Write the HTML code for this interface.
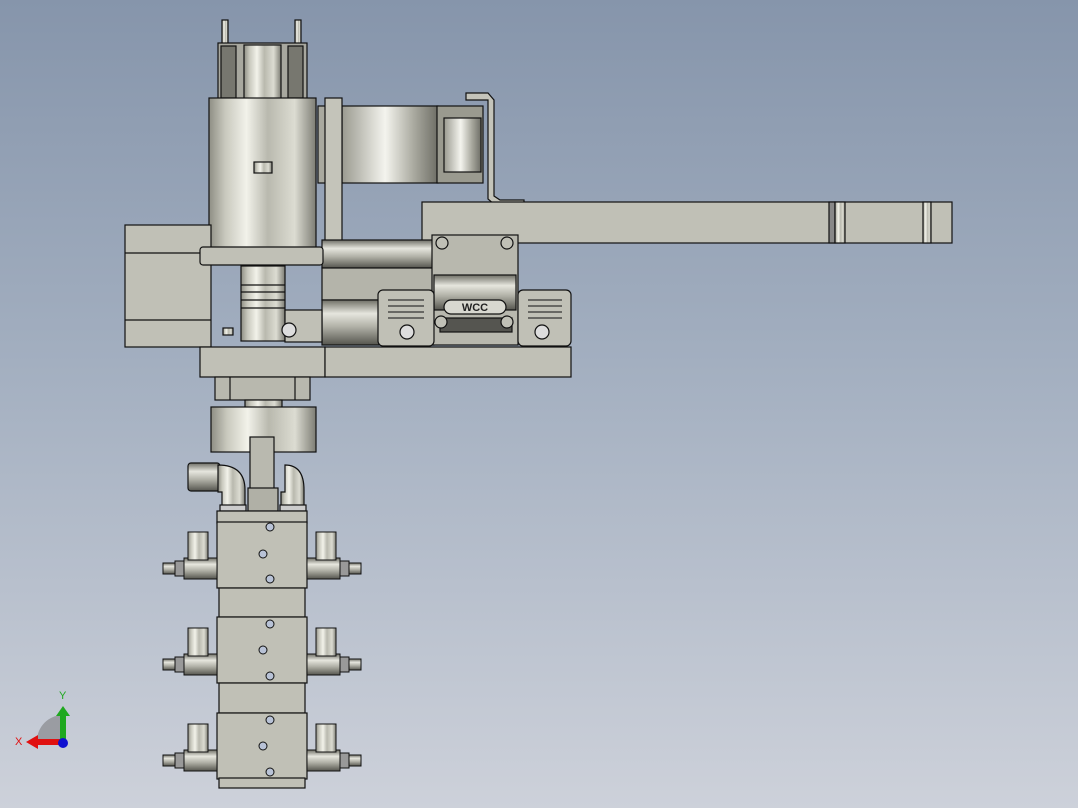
<!DOCTYPE html>
<html><head><style>html,body{margin:0;padding:0;width:1078px;height:808px;overflow:hidden}
body{background:linear-gradient(180deg,#8695ab 0%,#a3afc0 45%,#cdd1da 100%)}
svg{position:absolute;left:0;top:0}</style></head><body>
<svg width="1078" height="808" viewBox="0 0 1078 808" xmlns="http://www.w3.org/2000/svg">
<defs>
<linearGradient id="cyl" x1="0" x2="1" y1="0" y2="0">
<stop offset="0" stop-color="#8e8e84"/><stop offset=".15" stop-color="#c8c8bd"/><stop offset=".35" stop-color="#f2f2ea"/><stop offset=".55" stop-color="#b9b9ae"/><stop offset=".8" stop-color="#dcdcd2"/><stop offset="1" stop-color="#7d7d74"/></linearGradient>
<linearGradient id="vcyl" x1="0" x2="0" y1="0" y2="1">
<stop offset="0" stop-color="#6f6f66"/><stop offset=".3" stop-color="#e6e6de"/><stop offset=".6" stop-color="#b0b0a6"/><stop offset="1" stop-color="#55554e"/></linearGradient>
<linearGradient id="band" x1="0" x2="1">
<stop offset="0" stop-color="#9a9a90"/><stop offset=".45" stop-color="#f4f4ee"/><stop offset=".75" stop-color="#a9a99f"/><stop offset="1" stop-color="#6e6e66"/></linearGradient>
</defs>
<g stroke="#111" stroke-width="1.2" fill="#c0c0b6">
<!-- top pins -->
<rect x="222" y="20" width="6" height="24" fill="url(#cyl)"/>
<rect x="295" y="20" width="6" height="24" fill="url(#cyl)"/>
<rect x="218" y="43" width="89" height="56" fill="#a8a89f"/>
<rect x="221" y="46" width="15" height="52" fill="#77776f"/>
<rect x="288" y="46" width="15" height="52" fill="#77776f"/>
<rect x="244" y="45" width="37" height="54" fill="url(#cyl)"/>
<!-- big cylinder -->
<rect x="209" y="98" width="107" height="150" fill="url(#cyl)"/>
<rect x="254" y="162" width="18" height="11" fill="url(#cyl)"/>
<!-- left motor block -->
<rect x="125" y="225" width="86" height="122" fill="#c0c0b6"/>
<line x1="125" y1="253" x2="211" y2="253"/><line x1="125" y1="320" x2="211" y2="320"/>
<!-- band -->
<rect x="318" y="106" width="10" height="77" fill="#a9a99f"/>
<rect x="342" y="106" width="96" height="77" fill="url(#band)"/>
<rect x="437" y="106" width="46" height="77" fill="#9a9a8f"/>
<rect x="444" y="118" width="37" height="54" fill="url(#band)"/>
<path d="M466 93 L488 93 L494 100 L494 196 L500 200 L524 200 L524 205 L495 205 L488 199 L488 100 L466 100 Z" fill="#c4c4ba"/>
<!-- arm -->
<rect x="422" y="202" width="530" height="41" fill="#c0c0b6"/>
<rect x="829" y="202" width="6" height="41" fill="#888"/>
<rect x="835" y="202" width="10" height="41" fill="url(#cyl)"/>
<rect x="923" y="202" width="8" height="41" fill="url(#cyl)"/>
<!-- vertical plate -->
<rect x="325" y="98" width="17" height="167" fill="#c4c4ba"/>
<!-- actuator cylinder -->
<rect x="322" y="240" width="112" height="28" fill="url(#vcyl)"/>
<rect x="322" y="268" width="112" height="32" fill="#b4b4aa"/>
<rect x="322" y="300" width="112" height="45" fill="url(#vcyl)"/>
<!-- clamp -->
<rect x="432" y="235" width="86" height="110" fill="#b8b8ae"/>
<rect x="434" y="275" width="82" height="35" fill="url(#vcyl)"/>
<rect x="444" y="300" width="62" height="14" rx="7" fill="#d8d8d0"/>
<text x="475" y="311" font-family="Liberation Sans,sans-serif" font-size="11" font-weight="bold" text-anchor="middle" fill="#222" stroke="none">WCC</text>
<rect x="440" y="318" width="72" height="14" fill="#555550"/>
<circle cx="442" cy="243" r="6"/><circle cx="507" cy="243" r="6"/>
<circle cx="441" cy="322" r="6"/><circle cx="507" cy="322" r="6"/>
<!-- CCW side blocks -->
<rect x="378" y="290" width="56" height="56" rx="5" fill="#c0c0b6"/>
<rect x="518" y="290" width="53" height="56" rx="5" fill="#c0c0b6"/>
<g stroke-width="1"><line x1="388" y1="300" x2="424" y2="300"/><line x1="388" y1="306" x2="424" y2="306"/><line x1="388" y1="312" x2="424" y2="312"/><line x1="388" y1="318" x2="424" y2="318"/>
<line x1="528" y1="300" x2="562" y2="300"/><line x1="528" y1="306" x2="562" y2="306"/><line x1="528" y1="312" x2="562" y2="312"/><line x1="528" y1="318" x2="562" y2="318"/></g>
<circle cx="407" cy="332" r="7" fill="#ddd"/><circle cx="542" cy="332" r="7" fill="#ddd"/>
<!-- plate under cylinder -->
<rect x="200" y="247" width="123" height="18" rx="3" fill="#c0c0b6"/>
<!-- coupling -->
<rect x="241" y="266" width="44" height="75" fill="url(#cyl)"/>
<line x1="241" y1="285" x2="285" y2="285"/><line x1="241" y1="292" x2="285" y2="292"/><line x1="241" y1="300" x2="285" y2="300"/><line x1="241" y1="308" x2="285" y2="308"/>
<rect x="285" y="310" width="37" height="32" fill="#c0c0b6"/>
<circle cx="289" cy="330" r="7" fill="#ddd"/>
<rect x="223" y="328" width="10" height="7" fill="url(#cyl)"/>
<!-- bottom plate -->
<rect x="200" y="347" width="125" height="30" fill="#c0c0b6"/>
<rect x="325" y="347" width="246" height="30" fill="#c0c0b6"/>
<rect x="215" y="377" width="95" height="23" fill="#b8b8ae"/>
<line x1="230" y1="377" x2="230" y2="400"/><line x1="295" y1="377" x2="295" y2="400"/>
<rect x="245" y="400" width="37" height="8" fill="url(#cyl)"/>
<rect x="211" y="407" width="105" height="45" fill="url(#cyl)"/>
<!-- stem -->
<rect x="250" y="437" width="24" height="52" fill="#b9b9af"/>
<rect x="248" y="488" width="30" height="23" fill="#b0b0a6"/>
<!-- elbows -->
<rect x="188" y="463" width="32" height="28" rx="3" fill="url(#vcyl)"/>
<path d="M218 465 Q245 465 245 490 L245 510 L222 510 L222 492 L218 492 Z" fill="url(#cyl)"/>
<path d="M285 465 Q304 465 304 490 L304 510 L281 510 L281 492 L285 492 Z" fill="url(#cyl)"/>
<rect x="220" y="505" width="26" height="6" fill="#ccc"/><rect x="280" y="505" width="26" height="6" fill="#ccc"/>
<!-- manifold -->
<rect x="217" y="511" width="90" height="12" fill="#c0c0b6"/>
<rect x="217" y="522" width="90" height="66" fill="#c0c0b6"/>
<rect x="219" y="588" width="86" height="29" fill="#c0c0b6"/>
<rect x="217" y="617" width="90" height="66" fill="#c0c0b6"/>
<rect x="219" y="683" width="86" height="30" fill="#c0c0b6"/>
<rect x="217" y="713" width="90" height="66" fill="#c0c0b6"/>
<rect x="219" y="778" width="86" height="10" fill="#c0c0b6"/>
<g fill="#b8c2d6" stroke-width="1">
<circle cx="270" cy="527" r="4"/><circle cx="263" cy="554" r="4"/><circle cx="270" cy="579" r="4"/>
<circle cx="270" cy="624" r="4"/><circle cx="263" cy="650" r="4"/><circle cx="270" cy="676" r="4"/>
<circle cx="270" cy="720" r="4"/><circle cx="263" cy="746" r="4"/><circle cx="270" cy="772" r="4"/></g>
</g>
<!-- fittings -->
<g stroke="#111" stroke-width="1" id="fit">
<rect x="163" y="563" width="12" height="11" fill="url(#vcyl)"/>
<rect x="175" y="561" width="9" height="15" fill="#999"/>
<rect x="184" y="558" width="33" height="21" fill="url(#vcyl)"/>
<rect x="188" y="532" width="20" height="28" fill="url(#cyl)"/>
<rect x="349" y="563" width="12" height="11" fill="url(#vcyl)"/>
<rect x="340" y="561" width="9" height="15" fill="#999"/>
<rect x="307" y="558" width="33" height="21" fill="url(#vcyl)"/>
<rect x="316" y="532" width="20" height="28" fill="url(#cyl)"/>
</g>
<use href="#fit" y="96"/>
<use href="#fit" y="192"/>
<!-- triad -->
<path d="M37 741 A26 26 0 0 1 63 715 L63 741 Z" fill="#9a9ca2"/>
<rect x="60" y="714" width="6" height="28" fill="#1fa81f"/>
<path d="M56 716 L63 706 L70 716 Z" fill="#1fa81f"/>
<rect x="36" y="739" width="26" height="6" fill="#e01010"/>
<path d="M38 735 L26 742 L38 749 Z" fill="#e01010"/>
<circle cx="63" cy="743" r="5" fill="#1010d0"/>
<text x="59" y="699" font-family="Liberation Sans,sans-serif" font-size="11" fill="#1fa81f">Y</text>
<text x="15" y="745" font-family="Liberation Sans,sans-serif" font-size="11" fill="#e01010">X</text>
</svg>
</body></html>
